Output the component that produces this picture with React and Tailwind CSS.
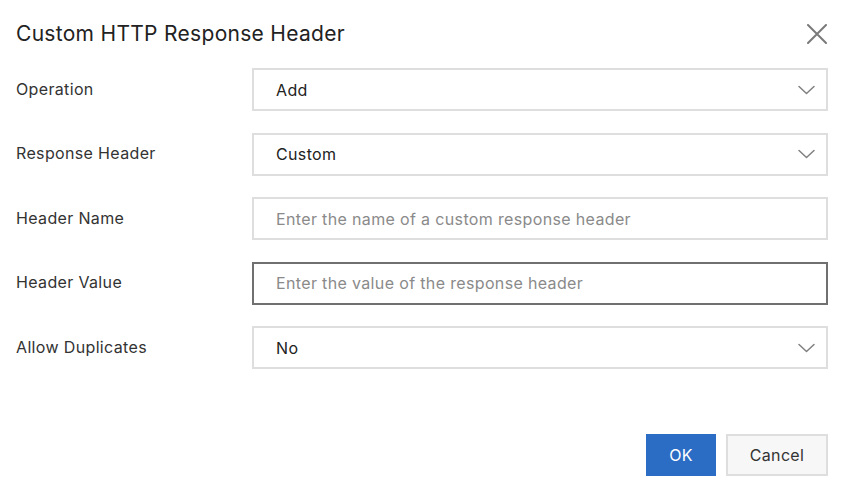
const rows = [
  { label: 'Operation', type: 'select', value: 'Add' },
  { label: 'Response Header', type: 'select', value: 'Custom' },
  { label: 'Header Name', type: 'input', placeholder: 'Enter the name of a custom response header' },
  { label: 'Header Value', type: 'input', placeholder: 'Enter the value of the response header', focused: true },
  { label: 'Allow Duplicates', type: 'select', value: 'No' },
];

function Chevron() {
  return (
    <svg width="17" height="10" viewBox="0 0 17 10" fill="none" className="text-[#808080]">
      <polyline points="1,1.5 8.5,8.5 16,1.5" stroke="currentColor" strokeWidth="1.5" strokeLinecap="round" strokeLinejoin="round" />
    </svg>
  );
}

function CloseIcon() {
  return (
    <svg width="20" height="20" viewBox="0 0 20 20" fill="none" className="text-[#7a7a7a]">
      <path d="M1 1 L19 19 M19 1 L1 19" stroke="currentColor" strokeWidth="2" strokeLinecap="round" />
    </svg>
  );
}

function Field({ row }) {
  if (row.type === 'select') {
    return (
      <div className="flex h-[43px] flex-1 items-center justify-between border-2 border-[#dedede] bg-white pl-[22px] pr-[11px]">
        <span className="text-[16px] text-[#222]">{row.value}</span>
        <Chevron />
      </div>
    );
  }
  return (
    <div
      className={
        'flex h-[43px] flex-1 items-center border-2 bg-white pl-[22px] ' +
        (row.focused ? 'border-[#707070]' : 'border-[#dedede]')
      }
    >
      <span className="text-[16px] text-[#8a8a8a]">{row.placeholder}</span>
    </div>
  );
}

export default function App() {
  return (
    <div className="h-[494px] w-[852px] bg-white font-['Inter',sans-serif] tracking-[0.35px] text-[#333]">
      <div className="flex h-[66px] items-center justify-between pl-4 pr-[25px] pt-[1px]">
        <h1 className="text-[21px] tracking-[0.3px] text-[#222]">Custom HTTP Response Header</h1>
        <CloseIcon />
      </div>

      <div className="flex flex-col gap-[21.5px] pl-4 pr-[24px] pt-[2px]">
        {rows.map((row) => (
          <div key={row.label} className="flex items-center">
            <label className="-mt-[2px] w-[236px] text-[16px] text-[#333]">{row.label}</label>
            <Field row={row} />
          </div>
        ))}
      </div>

      <div className="flex justify-end gap-[10px] pr-[24px] pt-[65px]">
        <button className="h-[42px] w-[70px] bg-[#2b6cc4] text-[16px] text-white">OK</button>
        <button className="h-[42px] w-[102px] border-2 border-[#dedede] bg-[#f7f7f7] text-[16px] text-[#333]">
          Cancel
        </button>
      </div>
    </div>
  );
}
